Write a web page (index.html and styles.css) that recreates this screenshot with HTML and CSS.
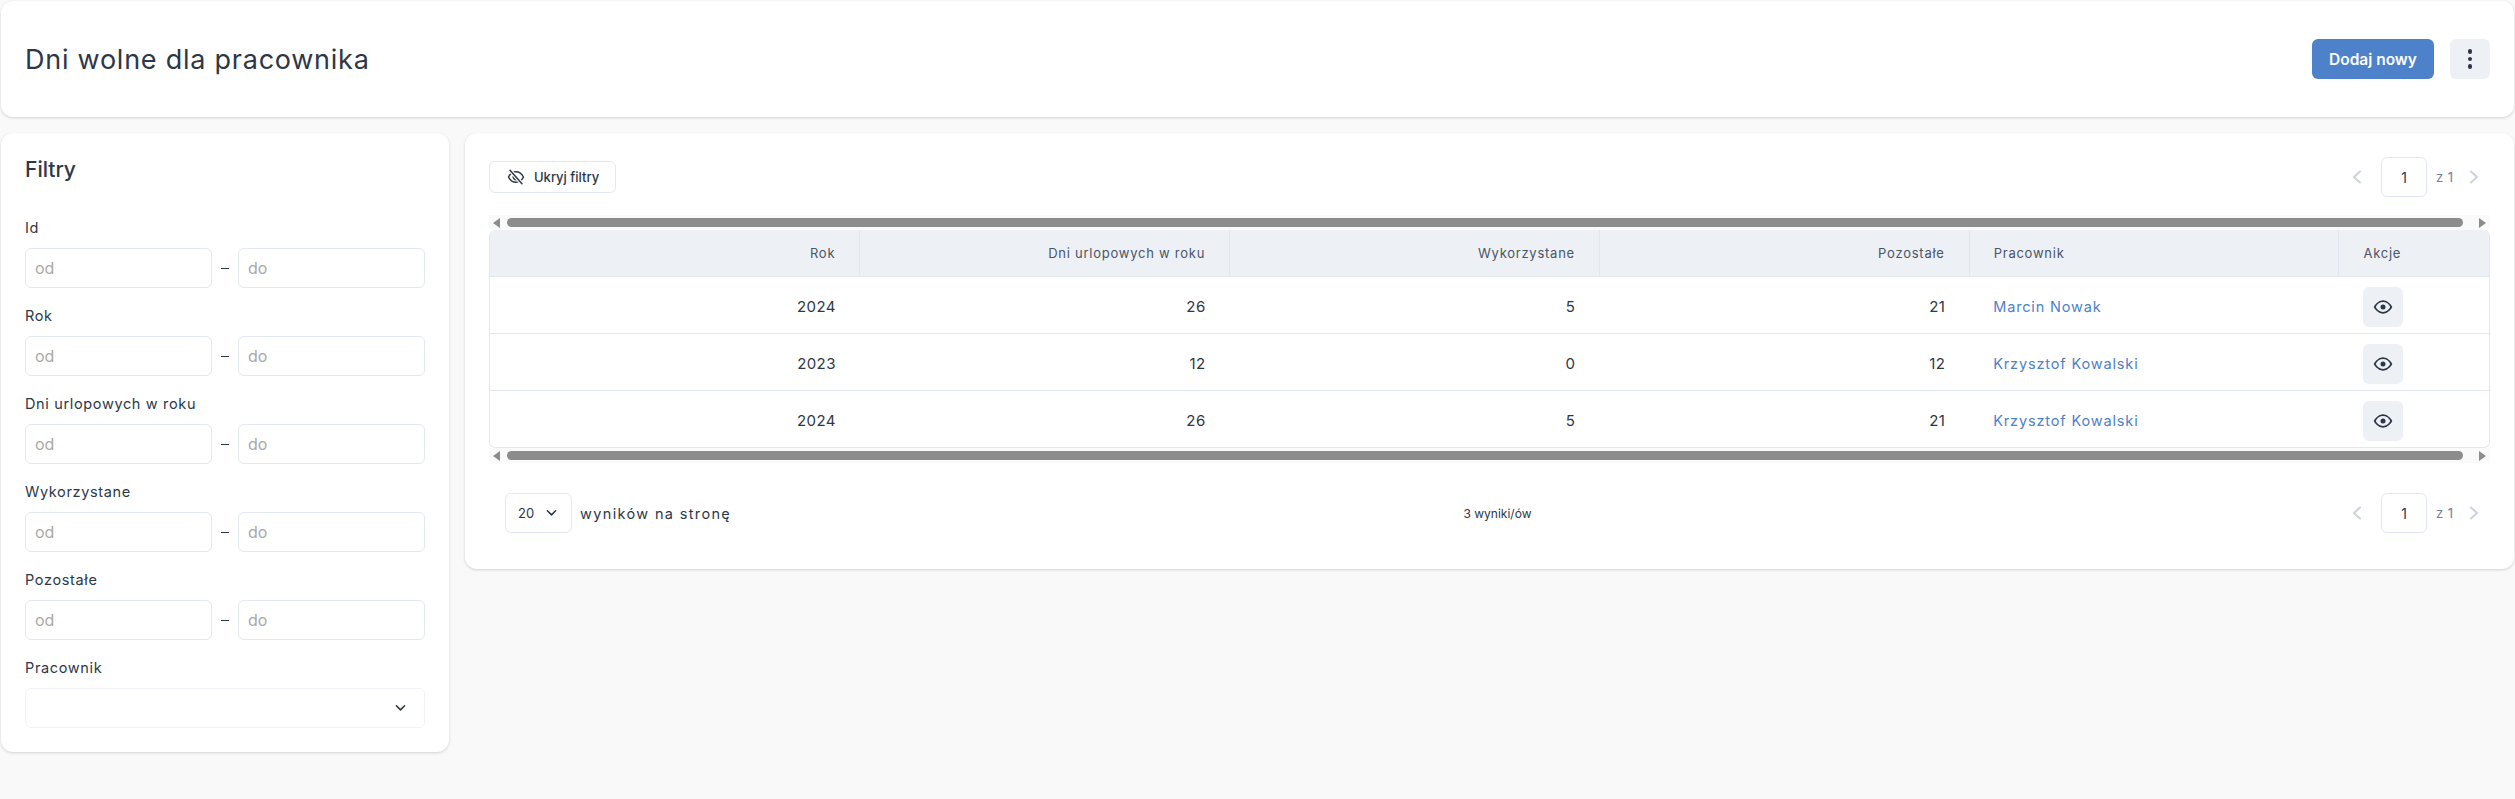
FILE: index.html
```html
<!DOCTYPE html>
<html lang="pl">
<head>
<meta charset="utf-8">
<title>Dni wolne dla pracownika</title>
<link rel="stylesheet" href="styles.css">
</head>
<body>
<svg class="defs" width="0" height="0" aria-hidden="true">
  <symbol id="eye" viewBox="0 0 24 24"><path d="M2 12s3.600-7 10-7 10 7 10 7-3.600 7-10 7-10-7-10-7Z" fill="none" stroke="currentColor" stroke-width="2" stroke-linecap="round" stroke-linejoin="round"/><circle cx="12" cy="12" r="3" fill="currentColor"/></symbol>
  <symbol id="chev-d" viewBox="0 0 12 8"><path d="M1.500 1.500 6 6l4.500-4.500" fill="none" stroke="currentColor" stroke-width="1.700" stroke-linecap="round" stroke-linejoin="round"/></symbol>
  <symbol id="chev-l" viewBox="0 0 10 14"><path d="M8 1.500 2 7l6 5.500" fill="none" stroke="currentColor" stroke-width="2" stroke-linecap="round" stroke-linejoin="round"/></symbol>
  <symbol id="chev-r" viewBox="0 0 10 14"><path d="M2 1.500 8 7l-6 5.500" fill="none" stroke="currentColor" stroke-width="2" stroke-linecap="round" stroke-linejoin="round"/></symbol>
</svg>
<div class="page">
  <header class="card topbar">
    <h1 class="title">Dni wolne dla pracownika</h1>
    <div class="top-actions">
      <button class="btn-primary">Dodaj nowy</button>
      <button class="btn-more" aria-label="Więcej"><span></span><span></span><span></span></button>
    </div>
  </header>
  <div class="columns">
    <aside class="card filters">
      <h2 class="filters-title">Filtry</h2>
      <div class="field"><label class="label">Id</label><div class="range"><input class="input" placeholder="od"><span class="dash"></span><input class="input" placeholder="do"></div></div>
      <div class="field"><label class="label">Rok</label><div class="range"><input class="input" placeholder="od"><span class="dash"></span><input class="input" placeholder="do"></div></div>
      <div class="field"><label class="label">Dni urlopowych w roku</label><div class="range"><input class="input" placeholder="od"><span class="dash"></span><input class="input" placeholder="do"></div></div>
      <div class="field"><label class="label">Wykorzystane</label><div class="range"><input class="input" placeholder="od"><span class="dash"></span><input class="input" placeholder="do"></div></div>
      <div class="field"><label class="label">Pozostałe</label><div class="range"><input class="input" placeholder="od"><span class="dash"></span><input class="input" placeholder="do"></div></div>
      <div class="field"><label class="label">Pracownik</label><div class="select-box"><svg class="select-chev"><use href="#chev-d"/></svg></div></div>
    </aside>
    <main class="card results">
      <div class="toolbar">
        <button class="btn-hide">
          <svg class="hide-icon" viewBox="0 0 24 24"><path d="M2 12s3.600-7 10-7 10 7 10 7-3.600 7-10 7-10-7-10-7Z" fill="none" stroke="currentColor" stroke-width="2" stroke-linejoin="round"/><path d="M9.500 9.500a3.500 3.500 0 0 0 5 5" fill="none" stroke="currentColor" stroke-width="2"/><path d="M4 3l16 18" stroke="#fff" stroke-width="5"/><path d="M4 3l16 18" stroke="currentColor" stroke-width="2" stroke-linecap="round"/></svg>
          Ukryj filtry
        </button>
        <div class="pager">
          <svg class="pager-chev"><use href="#chev-l"/></svg>
          <div class="pager-input">1</div>
          <span class="pager-total">z 1</span>
          <svg class="pager-chev"><use href="#chev-r"/></svg>
        </div>
      </div>
      <div class="scrollbar"><span class="arrow arrow-l"></span><span class="thumb"></span><span class="arrow arrow-r"></span></div>
      <div class="table-wrap">
        <table class="table">
          <thead>
            <tr><th class="num">Rok</th><th class="num">Dni urlopowych w roku</th><th class="num">Wykorzystane</th><th class="num">Pozostałe</th><th>Pracownik</th><th class="actions">Akcje</th></tr>
          </thead>
          <tbody>
            <tr><td class="num">2024</td><td class="num">26</td><td class="num">5</td><td class="num">21</td><td><a class="link">Marcin Nowak</a></td><td class="actions"><button class="btn-eye"><svg class="eye"><use href="#eye"/></svg></button></td></tr>
            <tr><td class="num">2023</td><td class="num">12</td><td class="num">0</td><td class="num">12</td><td><a class="link">Krzysztof Kowalski</a></td><td class="actions"><button class="btn-eye"><svg class="eye"><use href="#eye"/></svg></button></td></tr>
            <tr><td class="num">2024</td><td class="num">26</td><td class="num">5</td><td class="num">21</td><td><a class="link">Krzysztof Kowalski</a></td><td class="actions"><button class="btn-eye"><svg class="eye"><use href="#eye"/></svg></button></td></tr>
          </tbody>
        </table>
      </div>
      <div class="scrollbar"><span class="arrow arrow-l"></span><span class="thumb"></span><span class="arrow arrow-r"></span></div>
      <div class="footer">
        <div class="per-page">
          <div class="size-select"><span>20</span><svg class="size-chev"><use href="#chev-d"/></svg></div>
          <span class="per-page-text">wyników na stronę</span>
        </div>
        <div class="count">3 wyniki/ów</div>
        <div class="pager">
          <svg class="pager-chev"><use href="#chev-l"/></svg>
          <div class="pager-input">1</div>
          <span class="pager-total">z 1</span>
          <svg class="pager-chev"><use href="#chev-r"/></svg>
        </div>
      </div>
    </main>
  </div>
</div>
</body>
</html>
```
FILE: styles.css
```css
* { box-sizing: border-box; }
html, body { margin: 0; height: 100%; }
body {
  background: #f9f9f9;
  color: #2d3748;
  font-family: Inter, "Liberation Sans", sans-serif;
  overflow: hidden;
}
button { font-family: inherit; cursor: pointer; }
.defs { position: absolute; }
.page { padding: 1px 1px 0; display: flex; flex-direction: column; gap: 16px; }
.card {
  background: #fff;
  border-radius: 12px;
  box-shadow: 0 1px 3px rgba(0, 0, 0, .16);
}
.topbar {
  height: 116px;
  padding: 0 24px;
  display: flex;
  align-items: center;
  justify-content: space-between;
}
.title { margin: 0; font-size: 27px; font-weight: 400; letter-spacing: .75px; color: #2d3748; }
.top-actions { display: flex; gap: 16px; }
.btn-primary {
  width: 122px; height: 40px;
  background: #4d81ca; color: #fff;
  border: 0; border-radius: 6px;
  font-size: 15.500px; font-weight: 600;
}
.btn-more {
  width: 40px; height: 40px;
  background: #edf0f5; border: 0; border-radius: 6px;
  display: flex; flex-direction: column; align-items: center; justify-content: center; gap: 3px;
  padding: 0;
}
.btn-more span { width: 4.500px; height: 4.500px; border-radius: 50%; background: #2d3748; }
.columns { display: flex; gap: 16px; align-items: flex-start; }
.filters { width: 448px; flex: none; padding: 24px; }
.filters-title { margin: 1px 0 36px; font-size: 21px; line-height: 24px; font-weight: 500; color: #2d3748; }
.field { height: 88px; display: flex; flex-direction: column; gap: 10px; }
.field:last-child { height: 70px; }
.label { font-size: 14.500px; line-height: 20px; font-weight: 400; color: #2d3748; letter-spacing: .65px; }
.range { display: flex; align-items: center; }
.input {
  width: 187px; height: 40px;
  border: 1px solid #e3e7f1; border-radius: 6px;
  padding: 0 9px;
  font: 400 16px Inter, sans-serif;
  background: #fff;
  outline: none;
}
.input::placeholder { color: #a9a9a9; opacity: 1; }
.dash { width: 8px; height: 1px; margin: 0 9px; background: #2d3748; }
.select-box {
  width: 400px; height: 40px;
  border: 1px solid #f0f2f7; border-radius: 6px;
  display: flex; align-items: center; justify-content: flex-end; padding-right: 18px;
}
.select-chev, .size-chev { width: 11px; height: 8px; color: #2d3748; }
.results { flex: 1; padding: 24px 24px 36px; }
.toolbar { height: 40px; display: flex; align-items: center; justify-content: space-between; }
.btn-hide {
  width: 127px; height: 32px;
  background: #fff; border: 1px solid #e3e7f1; border-radius: 6px;
  font-size: 13px; font-weight: 500; color: #2d3748;
  display: flex; align-items: center; gap: 9px; padding: 0 0 0 17px;
}
.hide-icon { width: 18px; height: 18px; }
.pager { display: flex; align-items: center; margin-right: 11px; }
.pager-chev { width: 10px; height: 14px; color: #cbd2e0; }
.pager-input {
  width: 46px; height: 40px; margin: 0 9px 0 19px;
  border: 1px solid #e3e7f1; border-radius: 6px;
  display: flex; align-items: center; justify-content: center;
  font-size: 14px;
}
.pager-total { width: 33px; font-size: 13px; color: #717d96; letter-spacing: .5px; }
.scrollbar {
  height: 15px;
  background: #fafafa;
  display: flex; align-items: center; gap: 6px;
  padding: 0 4px;
}
.toolbar + .scrollbar { margin-top: 18px; }
.thumb { flex: 1; height: 9px; border-radius: 5px; background: #8c8c8c; margin-left: 1px; margin-right: 10px; }
.arrow { width: 0; height: 0; border-top: 5px solid transparent; border-bottom: 5px solid transparent; }
.arrow-l { border-right: 7px solid #8c8c8c; }
.arrow-r { border-left: 7px solid #8c8c8c; }
.table-wrap { border: 1px solid #e3e7f1; border-top: 0; border-radius: 6px; overflow: hidden; }
.table { width: 100%; border-collapse: collapse; table-layout: fixed; }
.table th {
  height: 46px; width: 369.800px;
  background: #edf0f5;
  border-bottom: 1px solid #e3e7f1; border-right: 1px solid #e3e7f1;
  padding: 0 24px;
  font-size: 13px; font-weight: 400; color: #4a5568; text-align: left; letter-spacing: .75px;
}
.table th:last-child { border-right: 0; width: 150px; }
.table td {
  height: 57px;
  padding: 4px 24px 0;
  border-bottom: 1px solid #e3e7f1;
  font-size: 15px; color: #2d3748; letter-spacing: .4px;
}
.table tr:last-child td { border-bottom: 0; }
.table .num { text-align: right; }
.link { color: #4d81ca; font-size: 14.500px; letter-spacing: .85px; }
.btn-eye {
  width: 40px; height: 40px; padding: 0;
  background: #edf0f5; border: 0; border-radius: 6px;
  display: flex; align-items: center; justify-content: center;
  color: #2d3748;
}
.eye { width: 20px; height: 20px; }
.footer {
  margin-top: 30px;
  padding: 0 0 0 16px;
  display: grid; grid-template-columns: 1fr auto 1fr; align-items: center;
}
.footer .pager { justify-self: end; }
.per-page { display: flex; align-items: center; gap: 8px; }
.size-select {
  width: 67px; height: 40px;
  border: 1px solid #e3e7f1; border-radius: 6px;
  display: flex; align-items: center; justify-content: space-between;
  padding: 0 14px 0 12px;
  font-size: 13px;
}
.per-page-text { font-size: 14.500px; letter-spacing: 1.350px; }
.count { font-size: 12px; }
```
